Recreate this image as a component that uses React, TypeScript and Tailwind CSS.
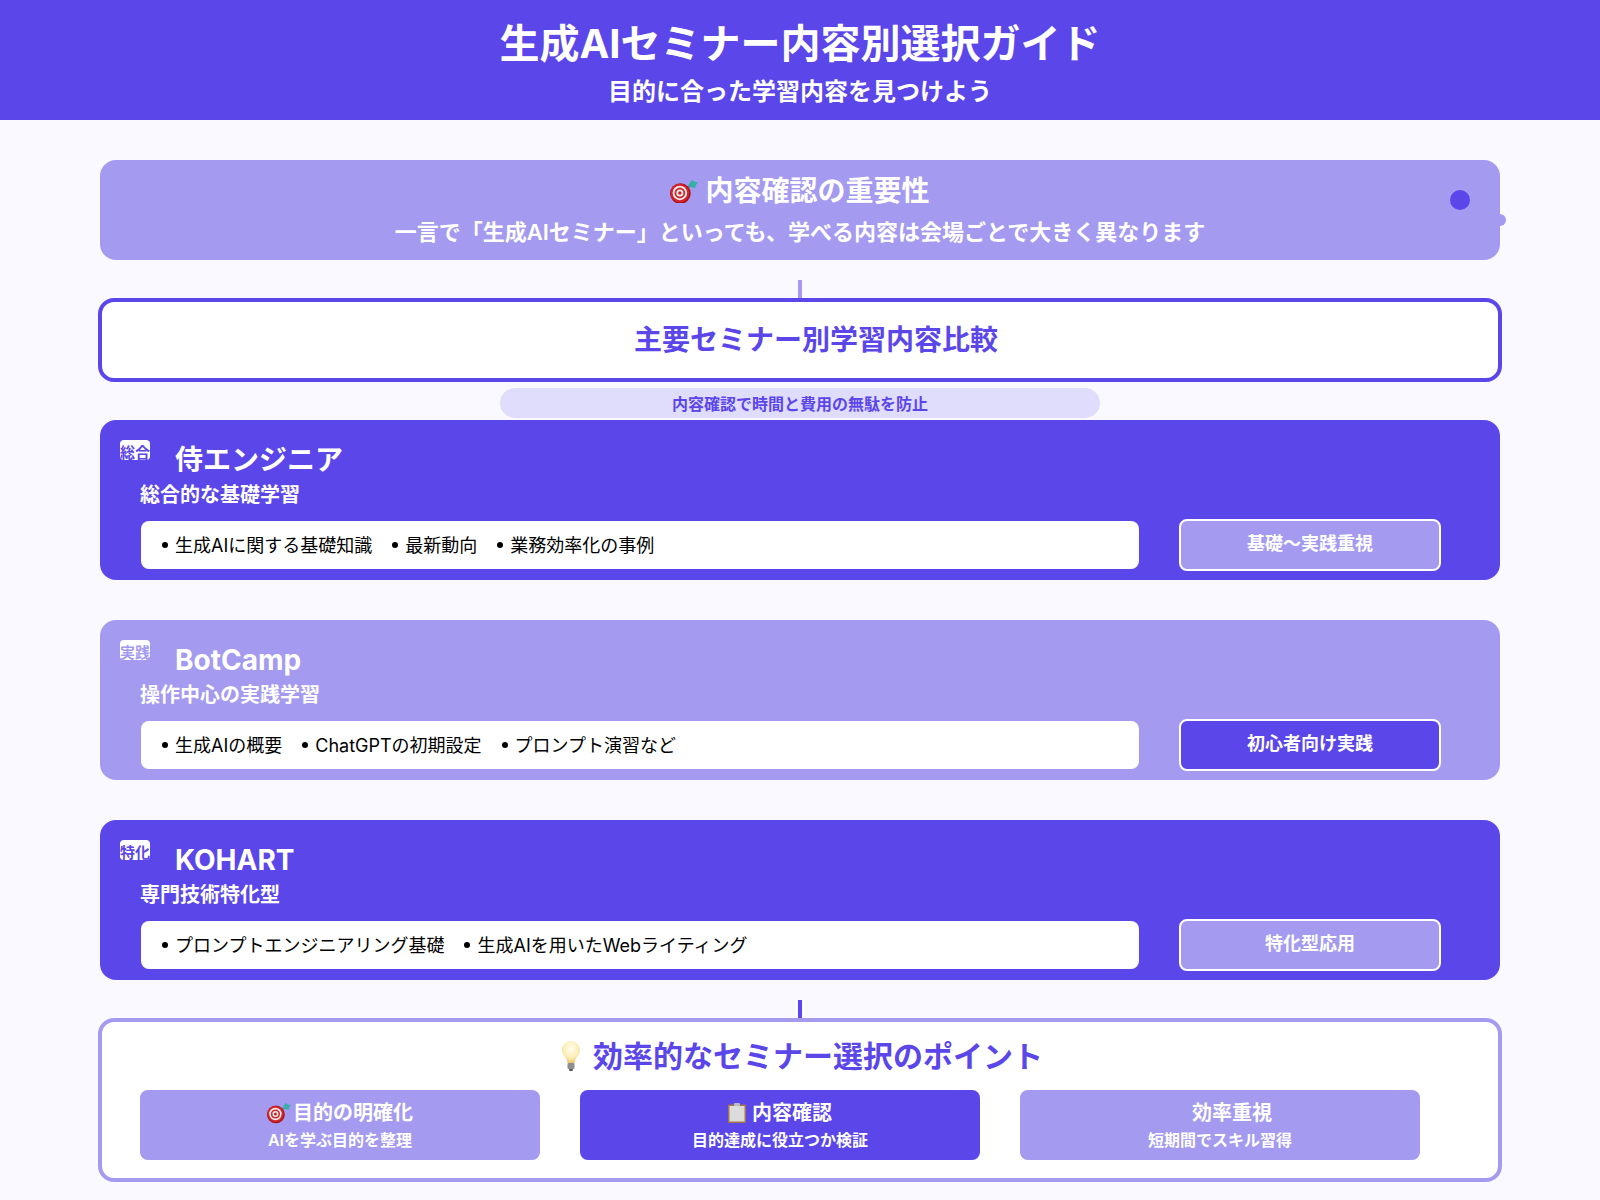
const rows = [
  {
    badge: "総合",
    name: "侍エンジニア",
    sub: "総合的な基礎学習",
    items: ["生成AIに関する基礎知識", "最新動向", "業務効率化の事例"],
    tag: "基礎〜実践重視",
    dark: true,
  },
  {
    badge: "実践",
    name: "BotCamp",
    sub: "操作中心の実践学習",
    items: ["生成AIの概要", "ChatGPTの初期設定", "プロンプト演習など"],
    tag: "初心者向け実践",
    dark: false,
  },
  {
    badge: "特化",
    name: "KOHART",
    sub: "専門技術特化型",
    items: ["プロンプトエンジニアリング基礎", "生成AIを用いたWebライティング"],
    tag: "特化型応用",
    dark: true,
  },
];

//Small emoji-like drawings
function TargetIcon({ width }: { width: number }) {
  return (
    <svg width={width} viewBox="0 0 27 24" className="shrink-0">
      <path d="M10 14 L21 6" stroke="#6b7f86" strokeWidth="1.5" />
      <path d="M17 7 L21 1 L24 3 L27 3 L25 6 L24 9 L21 8 Z" fill="#35b0a8" />
      <circle cx="10" cy="14" r="10" fill="#a81418" />
      <circle cx="9.5" cy="13.5" r="9" fill="#d4242a" />
      <circle cx="9.5" cy="13.5" r="7" fill="#f6eeee" />
      <circle cx="9.5" cy="13.5" r="5.2" fill="#cf2a2e" />
      <circle cx="9.5" cy="13.5" r="3.4" fill="#f6eeee" />
      <circle cx="9.5" cy="13.5" r="1.7" fill="#c8232a" />
    </svg>
  );
}

function BulbIcon() {
  return (
    <svg width="18" height="30" viewBox="0 0 18 30" className="shrink-0">
      <defs>
        <radialGradient id="bulb" cx="50%" cy="35%" r="60%">
          <stop offset="0%" stopColor="#fffdf0" />
          <stop offset="70%" stopColor="#fdeeb5" />
          <stop offset="100%" stopColor="#eccb78" />
        </radialGradient>
      </defs>
      <path d="M9 0 C4 0 0 4 0 9 C0 14 5 16 5.5 22 L12.5 22 C13 16 18 14 18 9 C18 4 14 0 9 0 Z" fill="url(#bulb)" />
      <rect x="5.5" y="22" width="7" height="6" rx="1" fill="#8f8f8f" />
      <rect x="7" y="28" width="4" height="2" rx="1" fill="#555555" />
    </svg>
  );
}

function ClipboardIcon() {
  return (
    <svg width="18" height="20" viewBox="0 0 18 20" className="shrink-0">
      <rect x="0" y="1.5" width="18" height="18.5" rx="1" fill="#a5764a" />
      <rect x="1.5" y="3" width="15" height="15.5" fill="#dcdcdc" />
      <rect x="6" y="0" width="6" height="3" rx="1" fill="#b9bcc4" />
    </svg>
  );
}

function SeminarRow({ row }: { row: (typeof rows)[number] }) {
  return (
    <div
      className={`relative h-[160px] rounded-2xl pl-10 pr-[59px] pt-[21px] text-white ${
        row.dark ? "bg-[#5b46ea]" : "bg-[#a49aef]"
      }`}
    >
      {/* badge */}
      <div
        className={`absolute left-5 top-5 flex h-5 w-[30px] justify-center rounded bg-white pt-[3px] text-[15px] leading-5 font-bold whitespace-nowrap ${
          row.dark ? "text-[#5b46ea]" : "text-[#a49aef]"
        }`}
      >
        {row.badge}
      </div>
      <h3 className="ml-[35px] h-[37px] text-[28px] leading-[38px] font-bold">{row.name}</h3>
      <p className="h-[34px] text-[20px] leading-[34px] font-semibold">{row.sub}</p>
      <div className="mt-[7px] flex items-center justify-between">
        <div className="ml-px flex h-12 w-[998px] items-center gap-5 rounded-lg bg-white pl-[21px] text-[18px] text-black">
          {row.items.map((item) => (
            <span key={item} className="flex items-center gap-[7px]">
              <i className="h-[6px] w-[6px] rounded-full bg-black" />
              {item}
            </span>
          ))}
        </div>
        <div
          className={`flex h-[52px] w-[262px] items-center justify-center rounded-lg border-2 border-white pb-[3px] text-[18px] font-semibold ${
            row.dark ? "bg-[#a49aef]" : "bg-[#5b46ea]"
          }`}
        >
          {row.tag}
        </div>
      </div>
    </div>
  );
}

export default function App() {
  return (
    <div
      className="min-h-[1200px] bg-[#faf9ff]"
      style={{ fontFamily: 'Inter, "Noto Sans CJK JP", sans-serif' }}
    >
      <header className="flex h-[120px] flex-col items-center bg-[#5b46ea] pt-[16px] text-white">
        <h1 className="h-[56px] text-[40px] leading-[56px] font-bold">生成AIセミナー内容別選択ガイド</h1>
        <p className="mt-[3px] text-[24px] leading-[34px] font-semibold">目的に合った学習内容を見つけよう</p>
      </header>

      <main className="px-[100px] pt-10">
        <section className="relative flex h-[100px] flex-col items-center rounded-2xl bg-[#a49aef] pt-[11px] text-white">
          <h2 className="flex items-center gap-[7px] text-[28px] leading-[40px] font-bold">
            <TargetIcon width={28} />
            内容確認の重要性
          </h2>
          <p className="mt-[5px] text-[22px] leading-[32px] font-semibold">
            一言で「生成AIセミナー」といっても、学べる内容は会場ごとで大きく異なります
          </p>
          <span className="absolute left-[1350px] top-[30px] h-5 w-5 rounded-full bg-[#5b46ea]" />
          <span className="absolute left-[1394px] top-[54px] h-3 w-3 rounded-full bg-[#a49aef]" />
        </section>

        <div className="mx-auto mt-5 h-[18px] w-1 bg-[#a49aef]" />

        <section className="-mx-[2px] flex h-[84px] items-center justify-center rounded-2xl border-4 border-[#5b46ea] bg-white pl-8">
          <h2 className="text-[28px] font-bold text-[#5b46ea]">主要セミナー別学習内容比較</h2>
        </section>

        <div className="mx-auto mt-[6px] flex h-[30px] w-[600px] items-center justify-center rounded-[15px] bg-[#e0dcfb] pt-[1px] text-[16px] font-semibold text-[#5b46ea]">
          内容確認で時間と費用の無駄を防止
        </div>

        <div className="mt-[2px] flex flex-col gap-10">
          {rows.map((row) => (
            <SeminarRow key={row.name} row={row} />
          ))}
        </div>

        <div className="mx-auto mt-5 h-[18px] w-1 bg-[#5b46ea]" />

        <section className="-mx-[2px] h-[164px] rounded-2xl border-4 border-[#a49aef] bg-white px-[38px] pt-[12px]">
          <h2 className="flex items-center justify-center gap-[13px] pl-[5px] text-[30px] leading-[44px] font-bold text-[#5b46ea]">
            <BulbIcon />
            効率的なセミナー選択のポイント
          </h2>
          <div className="mt-[12px] flex gap-10">
            <div className="flex h-[70px] w-[400px] flex-col items-center rounded-lg bg-[#a49aef] pt-[8px] text-white">
              <div className="flex items-center gap-[2px] text-[20px] leading-[30px] font-semibold">
                <TargetIcon width={24} />
                目的の明確化
              </div>
              <div className="text-[16px] leading-[24px] font-semibold">AIを学ぶ目的を整理</div>
            </div>
            <div className="flex h-[70px] w-[400px] flex-col items-center rounded-lg bg-[#5b46ea] pt-[8px] text-white">
              <div className="flex items-center gap-[6px] text-[20px] leading-[30px] font-semibold">
                <ClipboardIcon />
                内容確認
              </div>
              <div className="text-[16px] leading-[24px] font-semibold">目的達成に役立つか検証</div>
            </div>
            <div className="flex h-[70px] w-[400px] flex-col items-center rounded-lg bg-[#a49aef] pt-[8px] text-white">
              <div className="pl-6 text-[20px] leading-[30px] font-semibold">効率重視</div>
              <div className="text-[16px] leading-[24px] font-semibold">短期間でスキル習得</div>
            </div>
          </div>
        </section>
      </main>
    </div>
  );
}
